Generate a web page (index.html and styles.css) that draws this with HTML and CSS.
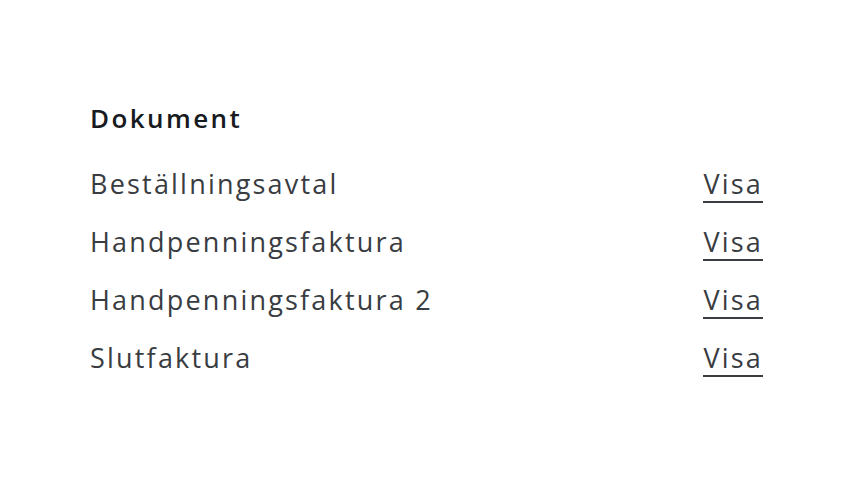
FILE: index.html
```html
<!DOCTYPE html>
<html lang="sv">
<head>
<meta charset="utf-8">
<link rel="stylesheet" href="styles.css">
</head>
<body>
<section class="docs">
  <h2 class="title">Dokument</h2>
  <ul class="list">
    <li class="row"><span class="name">Beställningsavtal</span><a class="link" href="#">Visa</a></li>
    <li class="row"><span class="name">Handpenningsfaktura</span><a class="link" href="#">Visa</a></li>
    <li class="row"><span class="name">Handpenningsfaktura 2</span><a class="link" href="#">Visa</a></li>
    <li class="row"><span class="name">Slutfaktura</span><a class="link" href="#">Visa</a></li>
  </ul>
</section>
</body>
</html>
```
FILE: styles.css
```css
html, body { margin: 0; padding: 0; background: #fff; }
body { font-family: "Open Sans", "Liberation Sans", sans-serif; }
.docs { width: 673px; padding: 98px 0 0 90px; }
.title { margin: 0 0 26px; font-size: 26px; font-weight: 600; color: #171a20; line-height: 40px; letter-spacing: 2.4px; }
.list { list-style: none; margin: 0; padding: 0; }
.row { display: flex; justify-content: space-between; align-items: baseline; height: 58px; font-size: 27px; color: #393c41; line-height: 40px; letter-spacing: 2.2px; }
.link { color: #393c41; text-decoration: none; border-bottom: 2px solid #393c41; line-height: 34px; }
```
